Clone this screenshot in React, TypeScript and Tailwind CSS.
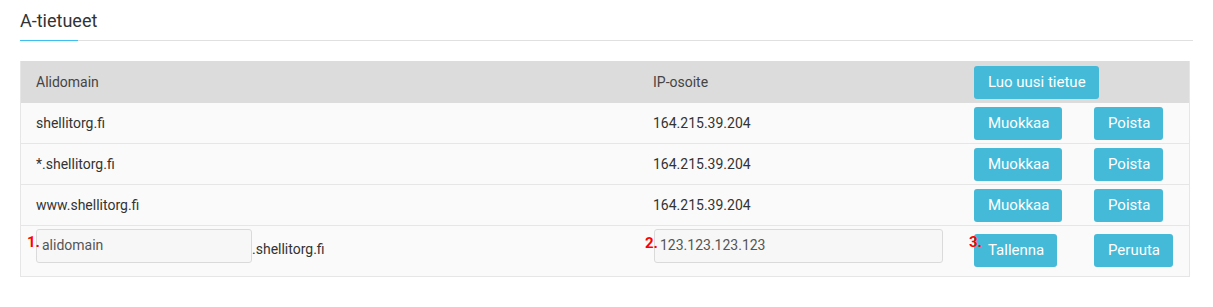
import React from 'react'

const rows = [
  { sub: 'shellitorg.fi', ip: '164.215.39.204' },
  { sub: '*.shellitorg.fi', ip: '164.215.39.204' },
  { sub: 'www.shellitorg.fi', ip: '164.215.39.204' },
]

function Btn({ children }: { children: React.ReactNode }) {
  return (
    <button className="h-[33px] rounded-[3px] bg-[#44bad8] pl-[14px] pr-[13px] text-[15px] leading-none text-white">
      {children}
    </button>
  )
}

function Mark({ n, className }: { n: string; className: string }) {
  return (
    <span className={`absolute text-[15px] font-bold leading-none text-[#f00] ${className}`}>
      {n}
    </span>
  )
}

export default function App() {
  const grid = 'grid grid-cols-[616px_321px_120px_1fr]'

  return (
    <div className="min-h-[307px] bg-white px-5 pt-[10px] font-['Roboto',sans-serif] text-[14px] text-[#333]">
      {/* section title */}
      <h2 className="text-[18px] leading-[22px] text-[#333]">A-tietueet</h2>
      <div className="mt-[8px] flex h-px bg-[#e0e0e0]">
        <div className="w-[58px] bg-[#3dc0ef]" />
      </div>

      <div className="mt-5 w-[1170px] border-x border-b border-[#e6e6e6]">
        {/* header */}
        <div className={`${grid} h-[42px] items-center bg-[#dcdcdc] text-[#444]`}>
          <div className="pl-[15px]">Alidomain</div>
          <div className="pl-4">IP-osoite</div>
          <div className="col-span-2 pl-4">
            <Btn>Luo uusi tietue</Btn>
          </div>
        </div>

        {rows.map((r) => (
          <div key={r.sub} className={`${grid} h-[41px] items-center border-b border-[#e6e6e6] bg-[#fafafa]`}>
            <div className="pl-[15px]">{r.sub}</div>
            <div className="pl-4">{r.ip}</div>
            <div className="pl-4">
              <Btn>Muokkaa</Btn>
            </div>
            <div className="pl-4">
              <Btn>Poista</Btn>
            </div>
          </div>
        ))}

        {/* edit row */}
        <div className={`${grid} h-[50px] items-start bg-[#fafafa]`}>
          <div className="relative flex items-end pl-[15px] pt-[3px]">
            <Mark n="1." className="left-[6px] top-[9px]" />
            <input
              readOnly
              value="alidomain"
              className="h-[34px] w-[216px] rounded-[3px] border border-[#dadada] bg-[#f7f7f7] px-[5px] pb-[2px] text-[14px] text-[#555] outline-none"
            />
            <span className="mb-[4px] leading-5">.shellitorg.fi</span>
          </div>
          <div className="relative pl-[17px] pt-[3px]">
            <Mark n="2." className="left-[8px] top-[10px]" />
            <input
              readOnly
              value="123.123.123.123"
              className="h-[34px] w-[289px] rounded-[3px] border border-[#dadada] bg-[#f7f7f7] px-[5px] pb-[2px] text-[14px] text-[#555] outline-none"
            />
          </div>
          <div className="relative pl-4 pt-[8px]">
            <Mark n="3." className="left-[11px] top-[9px]" />
            <Btn>Tallenna</Btn>
          </div>
          <div className="pl-4 pt-[8px]">
            <Btn>Peruuta</Btn>
          </div>
        </div>
      </div>
    </div>
  )
}
